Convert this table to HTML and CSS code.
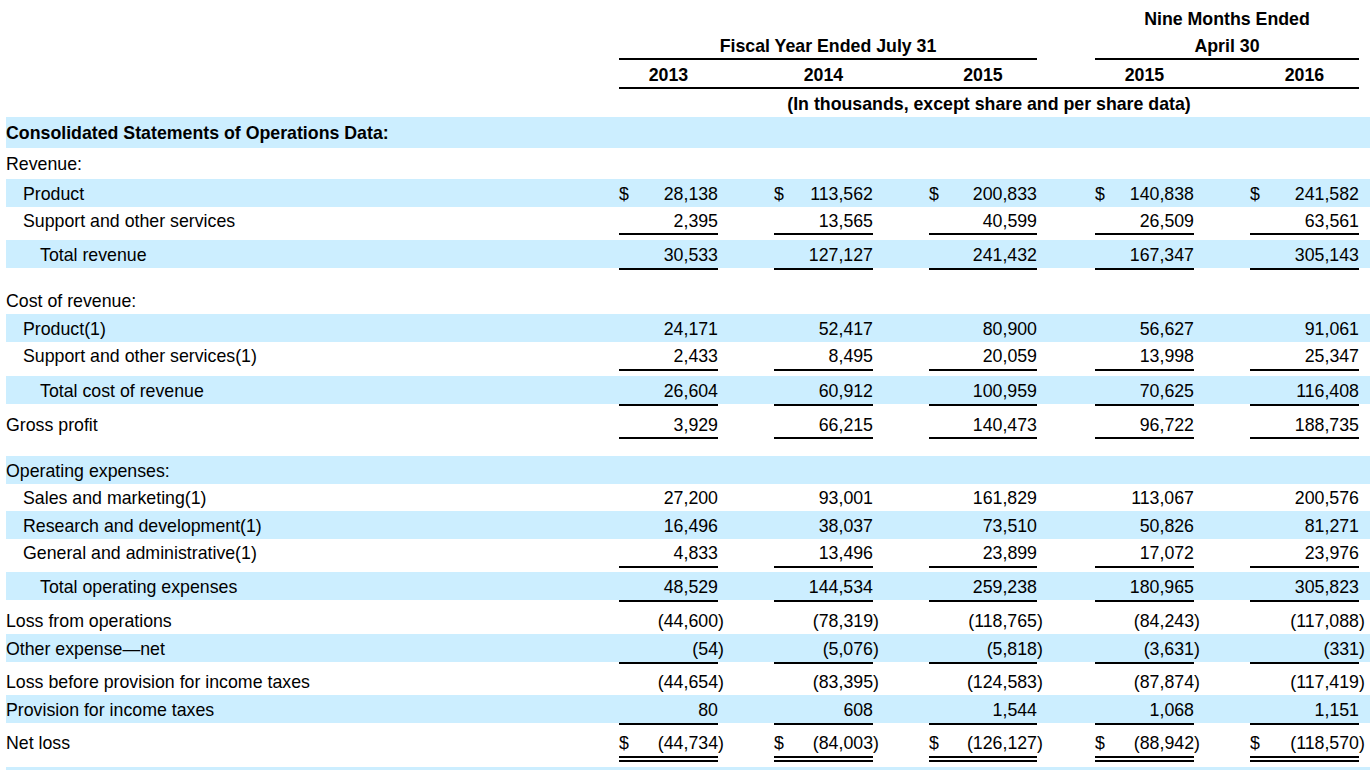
FILE: index.html
```html
<!DOCTYPE html>
<html lang="en">
<head>
<meta charset="utf-8">
<title>Consolidated Statements of Operations Data</title>
<link rel="stylesheet" href="styles.css">
</head>
<body>
<div class="page">
  <div class="grid head">
    <div class="nine">Nine Months Ended</div>
    <div class="fiscal">Fiscal Year Ended July 31</div>
    <div class="april">April 30</div>
    <div class="yr c1">2013</div>
    <div class="yr c2">2014</div>
    <div class="yr c3">2015</div>
    <div class="yr c4">2015</div>
    <div class="yr c5">2016</div>
    <div class="rule"></div>
    <div class="units">(In thousands, except share and per share data)</div>
  </div>

  <div class="grid row band h31"><div class="lbl strong">Consolidated Statements of Operations Data:</div></div>
  <div class="grid row h31"><div class="lbl">Revenue:</div></div>
  <div class="grid row band h28">
    <div class="lbl ind1">Product</div>
    <div class="v d c1"><span>$</span><span>28,138</span></div>
    <div class="v d c2"><span>$</span><span>113,562</span></div>
    <div class="v d c3"><span>$</span><span>200,833</span></div>
    <div class="v d c4"><span>$</span><span>140,838</span></div>
    <div class="v d c5"><span>$</span><span>241,582</span></div>
  </div>
  <div class="grid row h26">
    <div class="lbl ind1">Support and other services</div>
    <div class="v u c1"><span>2,395</span></div>
    <div class="v u c2"><span>13,565</span></div>
    <div class="v u c3"><span>40,599</span></div>
    <div class="v u c4"><span>26,509</span></div>
    <div class="v u c5"><span>63,561</span></div>
  </div>
  <div class="grid row band h28 mt7">
    <div class="lbl ind2">Total revenue</div>
    <div class="v u c1"><span>30,533</span></div>
    <div class="v u c2"><span>127,127</span></div>
    <div class="v u c3"><span>241,432</span></div>
    <div class="v u c4"><span>167,347</span></div>
    <div class="v u c5"><span>305,143</span></div>
  </div>

  <div class="grid row h28 mt18"><div class="lbl">Cost of revenue:</div></div>
  <div class="grid row band h28">
    <div class="lbl ind1">Product(1)</div>
    <div class="v c1"><span>24,171</span></div>
    <div class="v c2"><span>52,417</span></div>
    <div class="v c3"><span>80,900</span></div>
    <div class="v c4"><span>56,627</span></div>
    <div class="v c5"><span>91,061</span></div>
  </div>
  <div class="grid row h27">
    <div class="lbl ind1">Support and other services(1)</div>
    <div class="v u c1"><span>2,433</span></div>
    <div class="v u c2"><span>8,495</span></div>
    <div class="v u c3"><span>20,059</span></div>
    <div class="v u c4"><span>13,998</span></div>
    <div class="v u c5"><span>25,347</span></div>
  </div>
  <div class="grid row band h28 mt7">
    <div class="lbl ind2">Total cost of revenue</div>
    <div class="v u c1"><span>26,604</span></div>
    <div class="v u c2"><span>60,912</span></div>
    <div class="v u c3"><span>100,959</span></div>
    <div class="v u c4"><span>70,625</span></div>
    <div class="v u c5"><span>116,408</span></div>
  </div>
  <div class="grid row h26 mt7">
    <div class="lbl">Gross profit</div>
    <div class="v u c1"><span>3,929</span></div>
    <div class="v u c2"><span>66,215</span></div>
    <div class="v u c3"><span>140,473</span></div>
    <div class="v u c4"><span>96,722</span></div>
    <div class="v u c5"><span>188,735</span></div>
  </div>

  <div class="grid row band h28 mt19"><div class="lbl">Operating expenses:</div></div>
  <div class="grid row h27">
    <div class="lbl ind1">Sales and marketing(1)</div>
    <div class="v c1"><span>27,200</span></div>
    <div class="v c2"><span>93,001</span></div>
    <div class="v c3"><span>161,829</span></div>
    <div class="v c4"><span>113,067</span></div>
    <div class="v c5"><span>200,576</span></div>
  </div>
  <div class="grid row band h28">
    <div class="lbl ind1">Research and development(1)</div>
    <div class="v c1"><span>16,496</span></div>
    <div class="v c2"><span>38,037</span></div>
    <div class="v c3"><span>73,510</span></div>
    <div class="v c4"><span>50,826</span></div>
    <div class="v c5"><span>81,271</span></div>
  </div>
  <div class="grid row h27">
    <div class="lbl ind1">General and administrative(1)</div>
    <div class="v u c1"><span>4,833</span></div>
    <div class="v u c2"><span>13,496</span></div>
    <div class="v u c3"><span>23,899</span></div>
    <div class="v u c4"><span>17,072</span></div>
    <div class="v u c5"><span>23,976</span></div>
  </div>
  <div class="grid row band h28 mt6">
    <div class="lbl ind2">Total operating expenses</div>
    <div class="v u c1"><span>48,529</span></div>
    <div class="v u c2"><span>144,534</span></div>
    <div class="v u c3"><span>259,238</span></div>
    <div class="v u c4"><span>180,965</span></div>
    <div class="v u c5"><span>305,823</span></div>
  </div>
  <div class="grid row h28 mt6">
    <div class="lbl">Loss from operations</div>
    <div class="v c1"><span>(44,600<span class="rp">)</span></span></div>
    <div class="v c2"><span>(78,319<span class="rp">)</span></span></div>
    <div class="v c3"><span>(118,765<span class="rp">)</span></span></div>
    <div class="v c4"><span>(84,243<span class="rp">)</span></span></div>
    <div class="v c5"><span>(117,088<span class="rp">)</span></span></div>
  </div>
  <div class="grid row band h28">
    <div class="lbl">Other expense—net</div>
    <div class="v u c1"><span>(54<span class="rp">)</span></span></div>
    <div class="v u c2"><span>(5,076<span class="rp">)</span></span></div>
    <div class="v u c3"><span>(5,818<span class="rp">)</span></span></div>
    <div class="v u c4"><span>(3,631<span class="rp">)</span></span></div>
    <div class="v u c5"><span>(331<span class="rp">)</span></span></div>
  </div>
  <div class="grid row h28 mt5">
    <div class="lbl">Loss before provision for income taxes</div>
    <div class="v c1"><span>(44,654<span class="rp">)</span></span></div>
    <div class="v c2"><span>(83,395<span class="rp">)</span></span></div>
    <div class="v c3"><span>(124,583<span class="rp">)</span></span></div>
    <div class="v c4"><span>(87,874<span class="rp">)</span></span></div>
    <div class="v c5"><span>(117,419<span class="rp">)</span></span></div>
  </div>
  <div class="grid row band h28">
    <div class="lbl">Provision for income taxes</div>
    <div class="v u c1"><span>80</span></div>
    <div class="v u c2"><span>608</span></div>
    <div class="v u c3"><span>1,544</span></div>
    <div class="v u c4"><span>1,068</span></div>
    <div class="v u c5"><span>1,151</span></div>
  </div>
  <div class="grid row h28 mt5">
    <div class="lbl">Net loss</div>
    <div class="v d uu c1"><span>$</span><span>(44,734<span class="rp">)</span></span></div>
    <div class="v d uu c2"><span>$</span><span>(84,003<span class="rp">)</span></span></div>
    <div class="v d uu c3"><span>$</span><span>(126,127<span class="rp">)</span></span></div>
    <div class="v d uu c4"><span>$</span><span>(88,942<span class="rp">)</span></span></div>
    <div class="v d uu c5"><span>$</span><span>(118,570<span class="rp">)</span></span></div>
  </div>
  <div class="grid row band h28 mt11"></div>
</div>
</body>
</html>
```

FILE: styles.css
```css
html, body {
  margin: 0;
  padding: 0;
  overflow: hidden;
  background: #ffffff;
}

body {
  font-family: "Liberation Sans", Arial, sans-serif;
  font-size: 17.75px;
  color: #000000;
}

.page {
  width: 1364px;
  margin-left: 6px;
  padding-top: 4px;
}

.grid {
  display: grid;
  grid-template-columns: 613px 99px 56px 99px 56px 108px 58px 99px 56px 109px 11px;
}

/* ---------- header ---------- */
.head {
  grid-template-rows: 28px 28px 27px 2px 28px;
  font-weight: bold;
}

.head > div {
  display: flex;
  align-items: center;
  justify-content: center;
  box-sizing: border-box;
  padding-top: 2px;
}

.nine {
  grid-row: 1;
  grid-column: 8 / 11;
}

.fiscal,
.april {
  grid-row: 2;
  border-bottom: 2px solid #000;
}

.head > .fiscal,
.head > .april {
  padding-top: 3px;
}

.fiscal {
  grid-column: 2 / 7;
}

.april {
  grid-column: 8 / 11;
}

.head > .yr {
  grid-row: 3;
  padding-top: 3px;
}

.head > .rule {
  grid-row: 4;
  grid-column: 2 / 11;
  background: #000;
  padding: 0;
}

.units {
  grid-row: 5;
  grid-column: 2 / 11;
}

/* ---------- body rows ---------- */
.row > div {
  display: flex;
  align-items: center;
  white-space: nowrap;
  box-sizing: border-box;
  padding-top: 2px;
}

.band {
  background: #cceeff;
}

.h26 { height: 26px; }
.h27 { height: 27px; }
.h28 { height: 28px; }
.h31 { height: 31px; }

.mt5 { margin-top: 5px; }
.mt6 { margin-top: 6px; }
.mt7 { margin-top: 7px; }
.mt11 { margin-top: 11px; }
.mt18 { margin-top: 18px; }
.mt19 { margin-top: 19px; }

.lbl {
  grid-column: 1;
}

.strong {
  font-weight: bold;
}

.row > .ind1 { padding-left: 17px; }
.row > .ind2 { padding-left: 34px; }

.c1 { grid-column: 2; }
.c2 { grid-column: 4; }
.c3 { grid-column: 6; }
.c4 { grid-column: 8; }
.c5 { grid-column: 10; }

.v {
  justify-content: flex-end;
}

.v.d {
  justify-content: space-between;
}

.rp {
  display: inline-block;
  width: 0;
}

.u {
  box-shadow: 0 2px 0 #000;
}

.uu {
  box-shadow: 0 2px 0 #000, 0 4px 0 #fff, 0 6px 0 #000;
}
```
